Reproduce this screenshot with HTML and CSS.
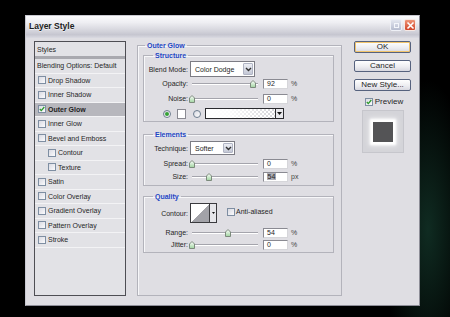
FILE: index.html
```html
<!DOCTYPE html>
<html>
<head>
<meta charset="utf-8">
<link rel="stylesheet" href="styles.css">
</head>
<body>
<div class="desk">
  <div class="dialog">
    <div class="titlebar">
      <span class="title">Layer Style</span>
      <div class="tbtns">
        <span class="tb tb-max"><span class="tb-sq"></span></span>
        <span class="tb tb-close"><svg width="9" height="9" viewBox="0 0 9 9"><path d="M1.5 1.5L7.5 7.5M7.5 1.5L1.5 7.5" stroke="#fff" stroke-width="1.6"/></svg></span>
      </div>
    </div>
    <div class="main">
      <div class="list">
        <div class="row head">Styles</div>
        <div class="row blend">Blending Options: Default</div>
        <div class="row"><span class="cb"></span>Drop Shadow</div>
        <div class="row"><span class="cb"></span>Inner Shadow</div>
        <div class="row sel"><span class="cb on"><svg width="6" height="6" viewBox="0 0 6 6"><path d="M0.8 3L2.3 4.6L5.3 1" fill="none" stroke="#2b9a2b" stroke-width="1.3"/></svg></span>Outer Glow</div>
        <div class="row"><span class="cb"></span>Inner Glow</div>
        <div class="row"><span class="cb"></span>Bevel and Emboss</div>
        <div class="row sub"><span class="cb"></span>Contour</div>
        <div class="row sub"><span class="cb"></span>Texture</div>
        <div class="row"><span class="cb"></span>Satin</div>
        <div class="row"><span class="cb"></span>Color Overlay</div>
        <div class="row"><span class="cb"></span>Gradient Overlay</div>
        <div class="row"><span class="cb"></span>Pattern Overlay</div>
        <div class="row"><span class="cb"></span>Stroke</div>
      </div>

      <fieldset class="outer">
        <legend class="lg-outer">Outer Glow</legend>

        <fieldset class="grp structure">
          <legend>Structure</legend>
          <div class="frow r-blend">
            <span class="lbl">Blend Mode:</span>
            <div class="select w-blend"><span class="sval">Color Dodge</span><span class="sarrow"><svg width="7" height="5" viewBox="0 0 7 5"><path d="M1 1L3.5 3.5L6 1" fill="none" stroke="#333" stroke-width="1.4"/></svg></span></div>
          </div>
          <div class="frow r-sl r-op">
            <span class="lbl">Opacity:</span>
            <div class="slider"><div class="track"><span class="thumb" style="left:92%"><svg width="6" height="8" viewBox="0 0 6 8"><path d="M0.5 7.5V3L3 0.5L5.5 3V7.5Z" fill="url(#tg)" stroke="#7c8a7c"/><defs><linearGradient id="tg" x1="0" y1="0" x2="0" y2="1"><stop offset="0" stop-color="#fff"/><stop offset="1" stop-color="#9fd49f"/></linearGradient></defs></svg></span></div></div>
            <span class="num">92</span><span class="unit">%</span>
          </div>
          <div class="frow r-sl r-gap4">
            <span class="lbl">Noise:</span>
            <div class="slider"><div class="track"><span class="thumb" style="left:0%"><svg width="6" height="8" viewBox="0 0 6 8"><path d="M0.5 7.5V3L3 0.5L5.5 3V7.5Z" fill="url(#tg)" stroke="#7c8a7c"/></svg></span></div></div>
            <span class="num">0</span><span class="unit">%</span>
          </div>
          <div class="frow r-color r-gap4">
            <span class="radio on"><span class="dot"></span></span>
            <span class="swatch"></span>
            <span class="radio r2"></span>
            <div class="grad"><span class="gfill"></span><span class="garrow"><svg width="5" height="3" viewBox="0 0 5 3"><path d="M0 0H5L2.5 3Z" fill="#111"/></svg></span></div>
          </div>
        </fieldset>

        <fieldset class="grp elements">
          <legend>Elements</legend>
          <div class="frow r-tech">
            <span class="lbl">Technique:</span>
            <div class="select w-tech"><span class="sval">Softer</span><span class="sarrow"><svg width="7" height="5" viewBox="0 0 7 5"><path d="M1 1L3.5 3.5L6 1" fill="none" stroke="#333" stroke-width="1.4"/></svg></span></div>
          </div>
          <div class="frow r-sl r-gap3">
            <span class="lbl">Spread:</span>
            <div class="slider"><div class="track"><span class="thumb" style="left:0%"><svg width="6" height="8" viewBox="0 0 6 8"><path d="M0.5 7.5V3L3 0.5L5.5 3V7.5Z" fill="url(#tg)" stroke="#7c8a7c"/></svg></span></div></div>
            <span class="num">0</span><span class="unit">%</span>
          </div>
          <div class="frow r-sl r-gap2">
            <span class="lbl">Size:</span>
            <div class="slider"><div class="track"><span class="thumb" style="left:26%"><svg width="6" height="8" viewBox="0 0 6 8"><path d="M0.5 7.5V3L3 0.5L5.5 3V7.5Z" fill="url(#tg)" stroke="#7c8a7c"/></svg></span></div></div>
            <span class="num"><span class="hl">54</span></span><span class="unit">px</span>
          </div>
        </fieldset>

        <fieldset class="grp quality">
          <legend>Quality</legend>
          <div class="frow r-contour">
            <span class="lbl">Contour:</span>
            <div class="contour"><span class="cthumb"></span><span class="carrow"><svg width="3" height="5" viewBox="0 0 3 5"><path d="M0 1H3L1.5 3Z" fill="#111"/></svg></span></div>
            <span class="cb aa"></span><span class="aatext">Anti-aliased</span>
          </div>
          <div class="frow r-sl r-gap4">
            <span class="lbl">Range:</span>
            <div class="slider"><div class="track"><span class="thumb" style="left:54%"><svg width="6" height="8" viewBox="0 0 6 8"><path d="M0.5 7.5V3L3 0.5L5.5 3V7.5Z" fill="url(#tg)" stroke="#7c8a7c"/></svg></span></div></div>
            <span class="num">54</span><span class="unit">%</span>
          </div>
          <div class="frow r-sl r-gap1">
            <span class="lbl">Jitter:</span>
            <div class="slider"><div class="track"><span class="thumb" style="left:0%"><svg width="6" height="8" viewBox="0 0 6 8"><path d="M0.5 7.5V3L3 0.5L5.5 3V7.5Z" fill="url(#tg)" stroke="#7c8a7c"/></svg></span></div></div>
            <span class="num">0</span><span class="unit">%</span>
          </div>
        </fieldset>
      </fieldset>

      <div class="side">
        <div class="btn btn-ok">OK</div>
        <div class="btn">Cancel</div>
        <div class="btn">New Style...</div>
        <div class="preview-row"><span class="cb on"><svg width="6" height="6" viewBox="0 0 6 6"><path d="M0.8 3L2.3 4.6L5.3 1" fill="none" stroke="#2b9a2b" stroke-width="1.3"/></svg></span><span>Preview</span></div>
        <div class="preview"><span class="pv-sq"></span></div>
      </div>
    </div>
  </div>
</div>
</body>
</html>
```

FILE: styles.css
```css
* { box-sizing: border-box; }
html, body { margin: 0; padding: 0; }
body {
  width: 450px;
  height: 317px;
  overflow: hidden;
  background:
    radial-gradient(ellipse 45px 150px at 428px 230px, rgba(22, 62, 48, 0.7), rgba(0, 0, 0, 0) 100%),
    #000;
  font-family: "Liberation Sans", Arial, sans-serif;
  font-size: 7px;
  color: #262626;
}
.desk { padding: 15px 0 0 25px; }
.dialog {
  width: 395px;
  height: 291px;
  background: #dfdee3;
  border: 1px solid;
  border-color: #c9c9d1 #8e8e98 #8e8e98 #c9c9d1;
  display: flex;
  flex-direction: column;
}
.titlebar {
  height: 22px;
  flex: none;
  display: flex;
  align-items: flex-start;
  justify-content: space-between;
  padding: 3px 3px 0 3px;
  background: linear-gradient(to bottom, #fbfbfd 0%, #eeeef2 30%, #d2d2da 70%, #c6c6d0 85%, #dadae2 100%);
}
.title {
  font-size: 8.5px;
  font-weight: bold;
  color: #202020;
  line-height: 11px;
  padding-top: 2px;
  text-shadow: 0 1px 0 rgba(255,255,255,0.6);
}
.tbtns { display: flex; gap: 2px; }
.tb {
  width: 12px;
  height: 12px;
  border-radius: 2px;
  display: flex;
  align-items: center;
  justify-content: center;
}
.tb-max {
  background: linear-gradient(to bottom, #e4e7f0, #b6bccf);
  border: 1px solid #eef0f6;
}
.tb-sq { width: 5px; height: 5px; border: 1px solid #f4f6fb; }
.tb-close {
  background: linear-gradient(to bottom, #ee9477, #d0452a);
  border: 1px solid #f6e8e4;
}

.main {
  display: flex;
  padding: 3px 0 0 8px;
}

/* left list */
.list {
  width: 92px;
  height: 255px;
  flex: none;
  border: 1px solid #4e4e54;
  background: #e2e2e6;
  display: flex;
  flex-direction: column;
}
.row {
  height: 14.5px;
  flex: none;
  display: flex;
  align-items: center;
  gap: 1px;
  padding-left: 3px;
  border-bottom: 1px solid #f3f3f5;
  white-space: nowrap;
}
.row.head { height: 17px; padding-left: 2px; border-bottom: 3px solid #a9a9af; padding-top: 0; }
.row.blend { height: 14.5px; padding-left: 2px; }
.row.sub { padding-left: 13px; }
.row.sel { background: #b7b7bd; font-weight: bold; color: #1e1e1e; }

.cb {
  width: 8px;
  height: 8px;
  flex: none;
  border: 1px solid #7e8ea2;
  background: linear-gradient(135deg, #d9dae2, #fbfbfd);
  display: inline-flex;
  align-items: center;
  justify-content: center;
  margin-right: 1px;
}

/* outer group */
fieldset { margin: 0; min-width: 0; }
legend {
  color: #1d46c4;
  font-weight: bold;
  line-height: 9px;
  height: 9px;
  padding: 0 2px;
}
.outer {
  width: 205px;
  height: 255px;
  flex: none;
  margin-left: 11px;
  padding: 0 7px 0 5px;
  border: 1px solid #b3b3bb;
  box-shadow: inset 1px 1px 0 #f7f7f9;
}
.lg-outer { margin-left: 2px; }
.grp {
  width: 191px;
  border: 1px solid #b3b3bb;
  box-shadow: inset 1px 1px 0 #f7f7f9;
  padding: 0 0 0 0;
}
.grp legend { margin-left: 9px; }
.structure { margin-top: 1px; padding-top: 1px; padding-bottom: 2px; }
.elements { margin-top: 8px; padding-top: 2px; padding-bottom: 3px; }
.quality { margin-top: 6px; padding-top: 2px; padding-bottom: 2px; }

.frow { display: flex; align-items: center; }
.lbl { width: 44px; margin-right: 2px; text-align: right; flex: none; white-space: nowrap; }
.r-blend { height: 16px; margin-bottom: 1px; }
.r-sl { height: 11px; }
.r-gap4 { margin-top: 4px; }
.r-gap3 { margin-top: 3px; }
.r-gap2 { margin-top: 2px; }
.r-gap1 { margin-top: 1px; }
.r-tech { height: 14px; }
.r-color { height: 11px; }
.r-contour { height: 20px; }

.select {
  height: 100%;
  border: 1px solid #7c7c84;
  background: #fff;
  display: flex;
  align-items: center;
  justify-content: space-between;
  padding: 1px;
}
.w-blend { width: 65px; }
.w-tech { width: 45px; }
.sval { padding-left: 3px; white-space: nowrap; color: #1e1e1e; }
.sarrow {
  width: 10px;
  height: 100%;
  display: flex;
  align-items: center;
  justify-content: center;
  background: linear-gradient(to bottom, #eceef4, #c4c8d6);
  border: 1px solid #b0b4c4;
  border-radius: 1px;
}

.slider {
  width: 70px;
  height: 11px;
  flex: none;
  display: flex;
  align-items: center;
}
.track {
  flex: 1;
  margin: 0 2px;
  height: 2px;
  border-top: 1px solid #a4a4ac;
  border-bottom: 1px solid #ffffff;
  position: relative;
}
.thumb {
  position: absolute;
  top: -4px;
  width: 6px;
  height: 8px;
  transform: translateX(-50%);
  display: block;
}
.thumb svg { display: block; }
.num {
  width: 25px;
  height: 10px;
  margin-left: 3px;
  flex: none;
  background: #fff;
  border: 1px solid;
  border-color: #8a8a92 #d6d6da #d6d6da #8a8a92;
  padding-left: 3px;
  line-height: 8px;
  color: #1e1e1e;
}
.hl { background: #aeaeb6; padding: 0 0.5px; }
.unit { margin-left: 3px; color: #444; }

.radio {
  width: 8px;
  height: 8px;
  border-radius: 50%;
  border: 1px solid #6e7e90;
  background: linear-gradient(135deg, #d8dae2, #fff);
  flex: none;
  display: flex;
  align-items: center;
  justify-content: center;
}
.radio.on { margin-left: 19px; }
.dot { width: 4px; height: 4px; border-radius: 50%; background: #36a236; }
.swatch {
  width: 9px;
  height: 10px;
  margin-left: 6px;
  background: #fff;
  border: 1px solid #8a8a92;
  flex: none;
}
.radio.r2 { margin-left: 7px; }
.grad {
  width: 79px;
  height: 11px;
  margin-left: 4px;
  border: 1px solid #2a2a2e;
  display: flex;
  flex: none;
}
.gfill {
  flex: 1;
  background:
    linear-gradient(to right, #ffffff 0%, rgba(255,255,255,0.9) 35%, rgba(255,255,255,0) 100%),
    repeating-conic-gradient(#d4d4d8 0% 25%, #ffffff 0% 50%) 0 0 / 4px 4px;
}
.garrow {
  width: 8px;
  border-left: 1px solid #2a2a2e;
  background: #e8e8ec;
  display: flex;
  align-items: center;
  justify-content: center;
}

.contour {
  width: 27px;
  height: 20px;
  border: 1px solid #3a3a3e;
  display: flex;
  flex: none;
}
.cthumb {
  flex: 1;
  background: linear-gradient(to top left, #a2a2a8 50%, #ffffff 50%);
}
.carrow {
  width: 7px;
  border-left: 1px solid #3a3a3e;
  background: #e6e6ea;
  display: flex;
  align-items: center;
  justify-content: center;
}
.cb.aa { margin-left: 10px; margin-top: -3px; }
.aatext { margin-left: 0; margin-top: -3px; }

/* right column */
.side {
  width: 57px;
  margin-left: 12px;
  flex: none;
  display: flex;
  flex-direction: column;
  align-items: center;
  gap: 7px;
}
.btn {
  width: 57px;
  height: 12px;
  border: 1px solid #56627e;
  border-radius: 2px;
  background: linear-gradient(to bottom, #ffffff, #ececf0 60%, #d8d8e0);
  font-size: 8px;
  line-height: 10px;
  text-align: center;
  color: #1e1e1e;
}
.btn-ok { box-shadow: inset 0 0 0 1px #f2c46a; }
.preview-row {
  display: flex;
  align-items: center;
  gap: 1px;
  font-size: 8px;
  height: 9px;
  margin-top: -1px;
  padding-left: 3px;
}
.preview {
  width: 42px;
  height: 43px;
  margin-top: -3px;
  border: 1px solid #c6c6cc;
  background: #d4d4d9;
  display: flex;
  align-items: center;
  justify-content: center;
}
.pv-sq {
  width: 20px;
  height: 20px;
  background: #545456;
  box-shadow: 0 0 2px 3px #ffffff, 0 0 5px 4px rgba(255,255,255,0.6);
}
```
